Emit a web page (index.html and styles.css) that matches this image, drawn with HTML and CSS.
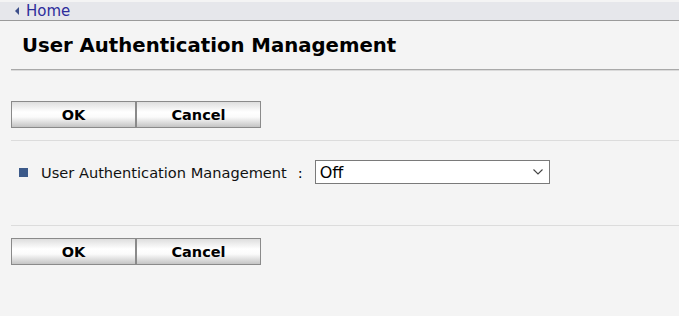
FILE: index.html
```html
<!DOCTYPE html>
<html lang="en">
<head>
<meta charset="UTF-8">
<title>User Authentication Management</title>
<link rel="stylesheet" href="styles.css">
</head>
<body>
    <div class="topbar">
        <a class="home" href="#"><span class="arrow"></span>Home</a>
    </div>

    <div class="page">
        <h1 class="title">User Authentication Management</h1>
        <hr class="rule dark">

        <div class="buttons first">
            <button class="btn">OK</button><button class="btn">Cancel</button>
        </div>
        <hr class="rule light">

        <div class="row">
            <span class="bullet"></span>
            <span class="label">User Authentication Management</span>
            <span class="colon">:</span>
            <div class="select-box">
                <select class="choice">
                    <option>Off</option>
                    <option>On</option>
                </select>
                <svg class="chevron" width="10" height="6" viewBox="0 0 10 6">
                    <polyline points="0.5,0.5 5,5 9.5,0.5" fill="none" stroke="#444" stroke-width="1.1"/>
                </svg>
            </div>
        </div>
        <hr class="rule light">

        <div class="buttons last">
            <button class="btn">OK</button><button class="btn">Cancel</button>
        </div>
    </div>
</body>
</html>
```

FILE: styles.css
```css
body {
    margin: 0;
    background-color: #f4f4f4;
    font-family: "DejaVu Sans", Verdana, sans-serif;
}
.topbar {
    margin-top: 2px;
    height: 18px;
    background-color: #e6e7eb;
    border-bottom: 1px solid #9a9a9a;
    padding-left: 15px;
    display: flex;
    align-items: center;
}
.home {
    color: #2e2e9c;
    text-decoration: none;
    font-size: 15px;
    display: flex;
    align-items: center;
}
.arrow {
    width: 0;
    height: 0;
    border-top: 4px solid transparent;
    border-bottom: 4px solid transparent;
    border-right: 4px solid #3d4f8a;
    margin-right: 7px;
}
.page {
    padding-left: 11px;
}
.title {
    margin: 0;
    padding: 13px 0 0 11px;
    height: 35px;
    font-size: 19.7px;
    font-weight: bold;
    color: #000;
}
.rule {
    margin: 0;
    border: 0;
    height: 1px;
}
.rule.dark {
    border-top: 1px solid #a9a9a9;
    background-color: #dadada;
}
.rule.light {
    background-color: #dcdcdc;
}
.buttons {
    display: flex;
    height: 27px;
}
.buttons.first {
    margin: 30px 0 12px 0;
}
.buttons.last {
    margin-top: 12px;
}
.btn {
    width: 125px;
    height: 27px;
    border: 1px solid #8a8a8a;
    background: linear-gradient(#dedede, #ffffff 40%, #fbfbfb 60%, #c4c4c4);
    font-family: "DejaVu Sans", Verdana, sans-serif;
    font-weight: bold;
    font-size: 14.5px;
    color: #000;
    padding: 0;
}
.btn + .btn {
    margin-left: -1px;
    width: 126px;
    border-left-width: 2px;
}
.row {
    display: flex;
    align-items: center;
    height: 24px;
    margin-top: 19px;
    margin-bottom: 41px;
}
.bullet {
    width: 9px;
    height: 9px;
    background-color: #3c5a8a;
    margin-left: 8px;
    margin-right: 13px;
}
.label {
    font-size: 14.6px;
    color: #111;
}
.colon {
    font-size: 14.6px;
    margin-left: 11px;
    margin-right: 12px;
}
.select-box {
    position: relative;
    display: flex;
}
.choice {
    appearance: none;
    width: 235px;
    height: 24px;
    border: 1px solid #7a7a7a;
    background-color: #fff;
    font-family: "DejaVu Sans", Verdana, sans-serif;
    font-size: 16px;
    color: #000;
    padding: 0 4px;
    border-radius: 0;
}
.chevron {
    position: absolute;
    right: 7px;
    top: 9px;
    pointer-events: none;
}
```
